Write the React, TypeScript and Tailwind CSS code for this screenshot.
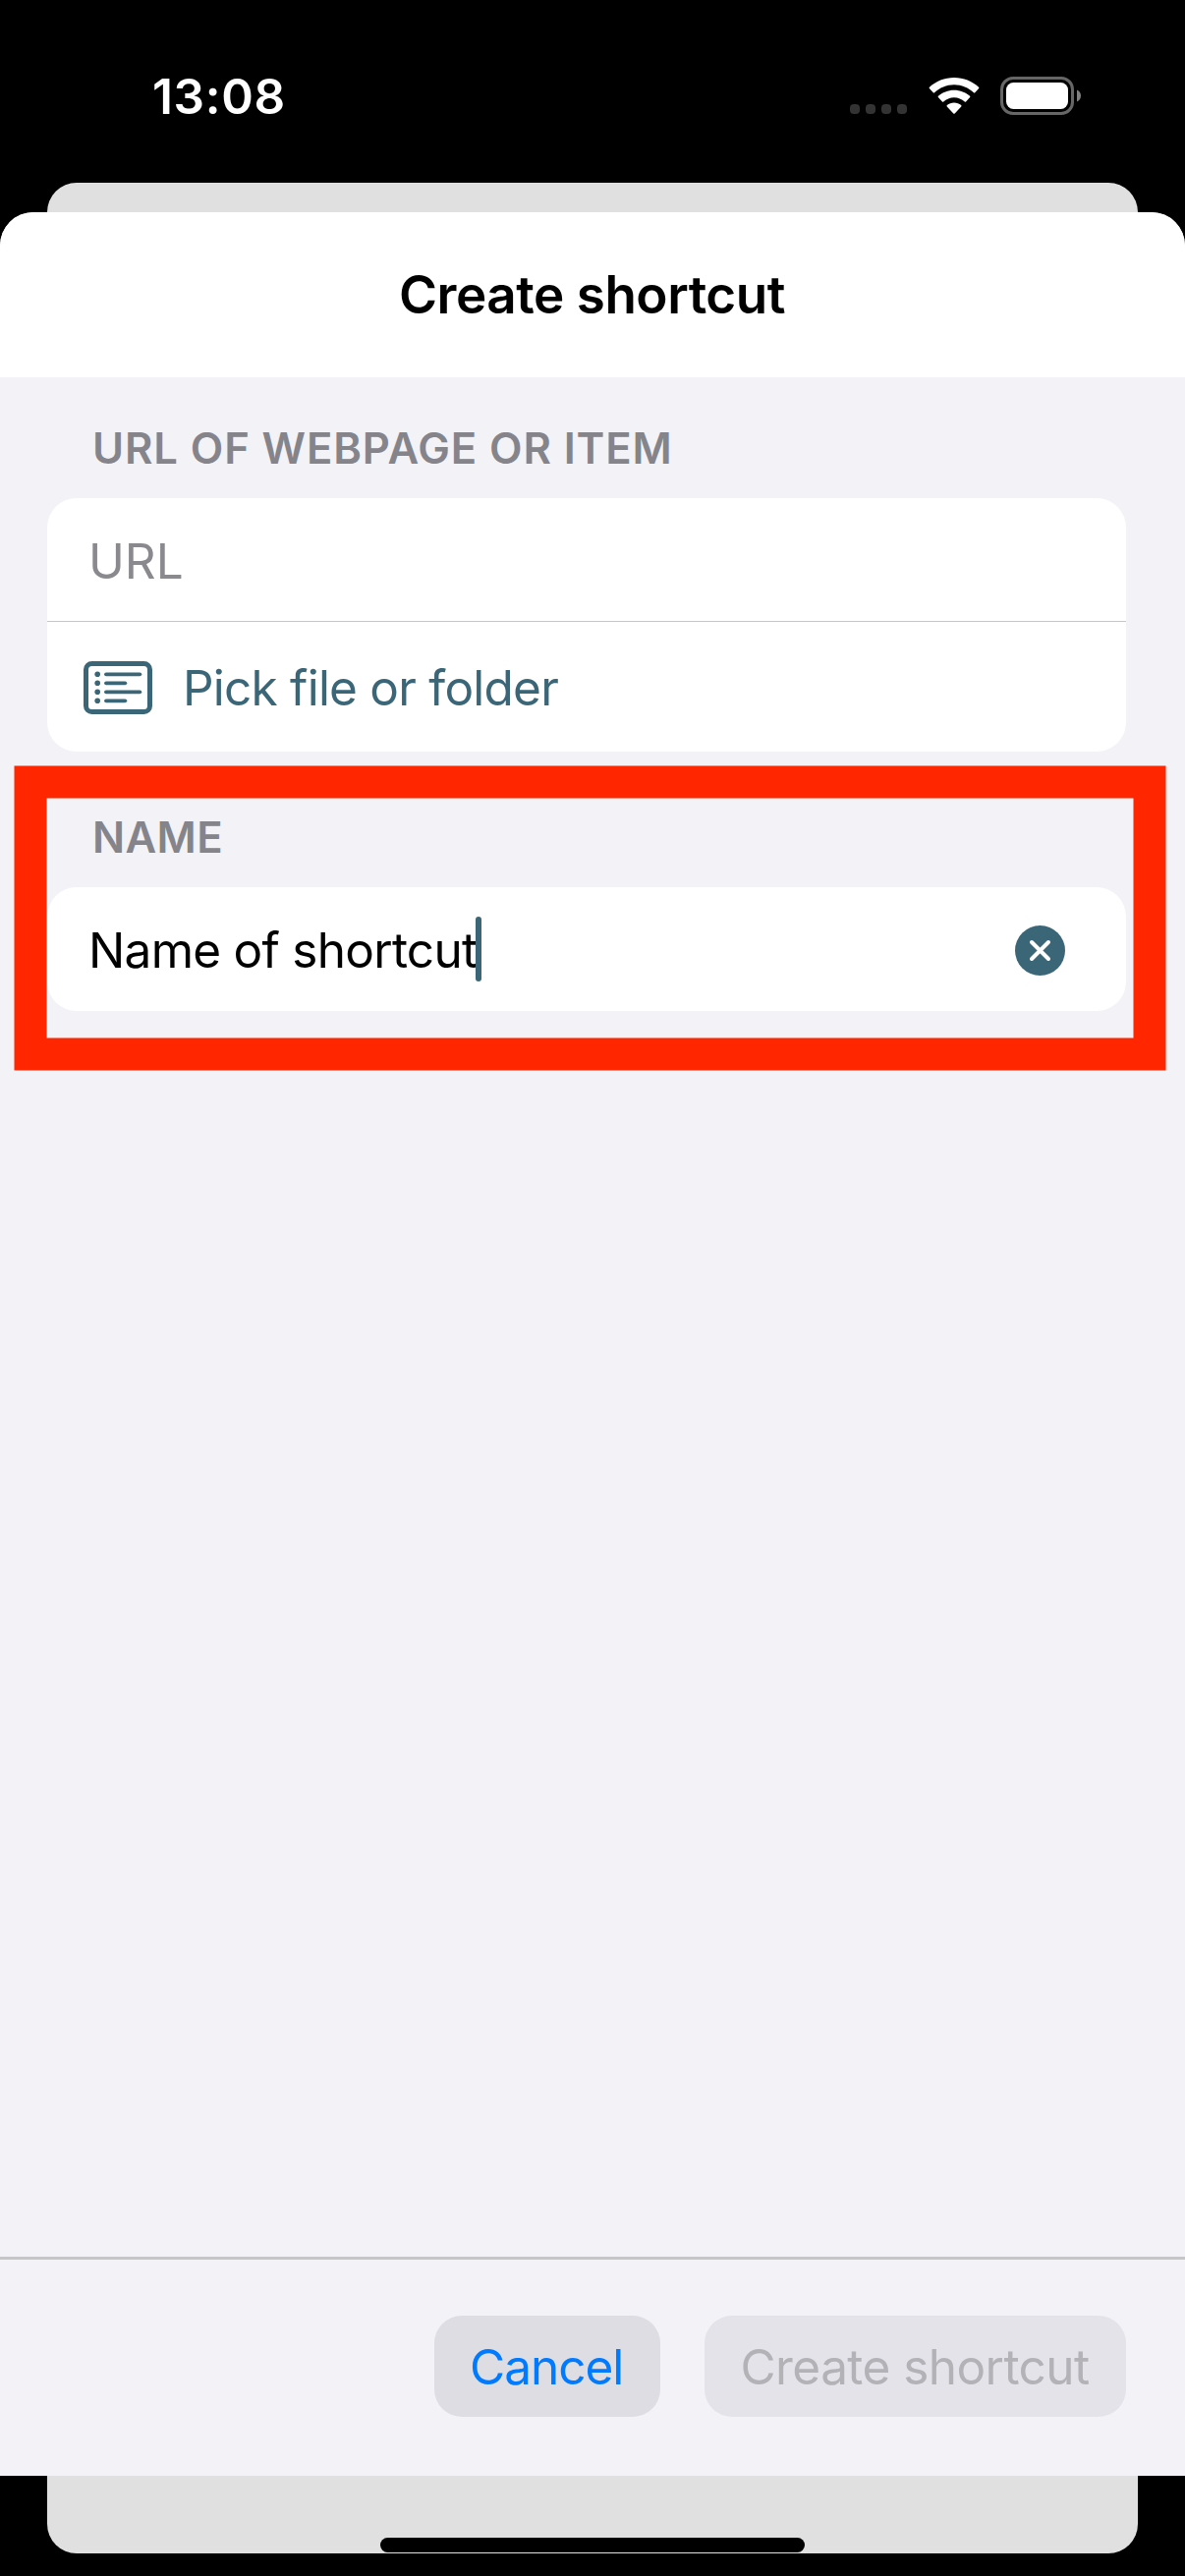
import React from 'react';

function WifiIcon() {
  return (
    <svg width="52" height="38" viewBox="0 0 52 38" fill="#fff">
      <path d="M26 1C16.300 1 7.500 4.700.900 10.700c-.4.400-.4.900-.05 1.300l3.900 4.300c.4.400.9.400 1.300.05C11.300 11.400 18.300 8.300 26 8.300s14.700 3.100 19.950 8.050c.4.350.9.350 1.300-.05l3.900-4.300c.350-.4.350-.9-.05-1.300C44.500 4.700 35.700 1 26 1z" />
      <path d="M26 13.700c-6.200 0-11.800 2.300-16.100 6.100-.4.400-.4.900-.05 1.300l4.100 4.400c.35.400.9.400 1.300.05C18.100 22.900 21.900 21.300 26 21.300s7.900 1.600 10.750 4.250c.4.350.95.350 1.300-.05l4.100-4.400c.35-.4.350-.9-.05-1.300C37.800 16 32.200 13.700 26 13.700z" />
      <path d="M26 26.600c-2.700 0-5.200.9-7.200 2.500-.4.350-.4.900-.05 1.300l6.550 7c.4.400 1 .4 1.400 0l6.550-7c.35-.4.350-.95-.05-1.300-2-1.600-4.500-2.500-7.200-2.500z" />
    </svg>
  );
}

function BatteryIcon() {
  return (
    <svg width="84" height="40" viewBox="0 0 84 40">
      <rect x="1.500" y="1.500" width="72" height="36" rx="11.500" fill="none" stroke="#666" strokeWidth="3" />
      <rect x="6" y="6" width="63" height="27" rx="7.500" fill="#fff" />
      <path d="M78 13.500v12c2.400-1 4-3.300 4-6s-1.600-5-4-6z" fill="#808080" />
    </svg>
  );
}

function ListIcon() {
  const lines = [
    { y: 13.300, end: 57.300 },
    { y: 22.300, end: 42.300 },
    { y: 31.300, end: 57.300 },
    { y: 40.300, end: 42.300 },
  ];
  return (
    <svg className="mt-0.5" width="70" height="54" viewBox="0 0 70 54" fill="none" stroke="#3b6678" strokeLinecap="round">
      <rect x="2.500" y="2.500" width="65" height="49" rx="6" strokeWidth="5" />
      {lines.map((l) => (
        <g key={l.y}>
          <circle cx="14.200" cy={l.y} r="2.800" fill="#3b6678" stroke="none" />
          <path d={`M23 ${l.y}H${l.end}`} strokeWidth="3.800" />
        </g>
      ))}
    </svg>
  );
}

function StatusBar() {
  return (
    <div className="flex h-[186px] justify-between pt-[78px] pl-[155px] pr-[104px] text-white">
      <span className="h-10 text-[49.5px] leading-[40px] font-semibold tracking-[0.66px]">13:08</span>
      <div className="flex h-10">
        <div className="mt-7 flex gap-1.5">
          <i className="size-2.5 rounded-[4px] bg-[#333]" />
          <i className="size-2.5 rounded-[4px] bg-[#333]" />
          <i className="size-2.5 rounded-[4px] bg-[#333]" />
          <i className="size-2.5 rounded-[4px] bg-[#333]" />
        </div>
        <div className="ml-[21.5px]"><WifiIcon /></div>
        <div className="ml-[21.5px]"><BatteryIcon /></div>
      </div>
    </div>
  );
}

export default function App() {
  return (
    <div className="relative h-[2622px] w-[1206px] overflow-hidden bg-black font-[Inter,sans-serif] whitespace-nowrap">
      <StatusBar />
      <div className="mx-12 h-[30px] rounded-t-[30px] bg-[#e0e0e0]" />
      <main className="flex h-[2304px] flex-col overflow-hidden rounded-t-[34px] bg-[#f2f2f7]">
        <header className="flex h-[168px] items-center bg-white pl-[406px]">
          <h1 className="text-[53px] leading-[60px] font-semibold tracking-[-0.48px] text-black">Create shortcut</h1>
        </header>

        <section className="pr-[60px] pl-12">
          <h2 className="h-[123px] pt-[43px] pl-[46px] text-[43.6px] leading-[60px] font-semibold tracking-[0.9px] text-[#85848a]">
            URL OF WEBPAGE OR ITEM
          </h2>
          <div className="h-[258px] rounded-[30px] bg-white">
            <div className="h-[126px] border-b border-[#c6c6c8] pt-[34px] pl-[42px] text-[49.5px] leading-[60px] text-[#8a8a8e]">URL</div>
            <div className="flex h-[132px] items-center pl-[37px] text-[#3b6678]">
              <ListIcon />
              <span className="mt-0.5 ml-[31px] text-[49.5px] leading-[60px] tracking-[-0.77px]">Pick file or folder</span>
            </div>
          </div>
        </section>

        <section className="pr-[60px] pl-12">
          <h2 className="h-[138px] pt-[58px] pl-[46px] text-[43.6px] leading-[60px] font-semibold tracking-[0.4px] text-[#85848a]">NAME</h2>
          <div className="flex h-[126px] items-center rounded-[30px] bg-white pr-[62px] pl-[42px]">
            <div className="flex flex-1 items-center">
              <span className="mt-0.5 text-[49.5px] leading-[60px] tracking-[-0.73px] text-black">Name of shortcut</span>
              <i className="-ml-px h-[66px] w-1.5 rounded-full bg-[#3b6678]" />
            </div>
            <svg className="mt-[3px]" width="51" height="51" viewBox="0 0 51 51">
              <circle cx="25.500" cy="25.500" r="25.500" fill="#3b6678" />
              <path d="M17 17l17 17M34 17L17 34" stroke="#fff" strokeWidth="4" strokeLinecap="round" />
            </svg>
          </div>
        </section>

        <footer className="mt-auto flex h-[223px] justify-end gap-[45px] border-t-3 border-[#c6c6c8] pt-[57px] pr-[60px] text-[49.5px] leading-[60px]">
          <button className="flex h-[103px] w-[230px] items-center rounded-[28px] bg-[#dedde3] pt-px pl-[36px] tracking-[-1px] text-[#007aff]">Cancel</button>
          <button className="flex h-[103px] w-[429px] items-center rounded-[28px] bg-[#e4e3e9] pt-px pl-[36.5px] tracking-[-0.56px] text-[#b2b2b7]">
            Create shortcut
          </button>
        </footer>
      </main>
      <div className="mx-12 flex h-[79px] items-end justify-center rounded-b-[30px] bg-[#e0e0e0] pb-px">
        <div className="h-[15px] w-[432px] rounded-full bg-black" />
      </div>

      <svg className="absolute top-[779px] left-[14px]" width="1173" height="311" fill="none">
        <rect x="17" y="17" width="1139" height="277" stroke="#ff2600" strokeWidth="33" />
      </svg>
    </div>
  );
}
